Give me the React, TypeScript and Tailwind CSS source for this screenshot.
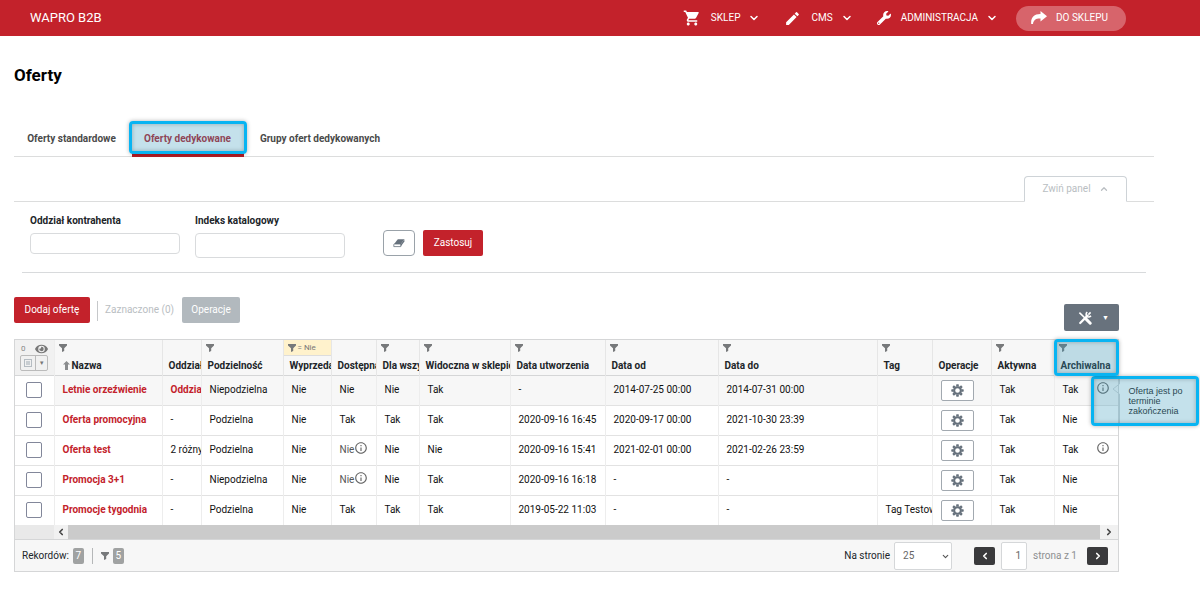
import React from 'react';
import { MdShoppingCart, MdEdit, MdInfoOutline } from 'react-icons/md';
import { FaWrench, FaEye } from 'react-icons/fa';
import { ChevronDown, ChevronUp, ChevronLeft, ChevronRight } from 'lucide-react';

interface Offer {
  name: string;
  branch: string;
  divisible: string;
  sale: string;
  available: string;
  availableInfo?: boolean;
  forAll: string;
  visible: string;
  created: string;
  from: string;
  to: string;
  tag: string;
  archived: string;
  archivedInfo?: boolean;
}

const offers: Offer[] = [
  { name: 'Letnie orzeźwienie', branch: 'Oddział', divisible: 'Niepodzielna', sale: 'Nie', available: 'Nie', forAll: 'Nie', visible: 'Tak', created: '-', from: '2014-07-25 00:00', to: '2014-07-31 00:00', tag: '', archived: 'Tak', archivedInfo: true },
  { name: 'Oferta promocyjna', branch: '-', divisible: 'Podzielna', sale: 'Nie', available: 'Tak', forAll: 'Tak', visible: 'Tak', created: '2020-09-16 16:45', from: '2020-09-17 00:00', to: '2021-10-30 23:39', tag: '', archived: 'Nie' },
  { name: 'Oferta test', branch: '2 różnych', divisible: 'Podzielna', sale: 'Nie', available: 'Nie', availableInfo: true, forAll: 'Nie', visible: 'Nie', created: '2020-09-16 15:41', from: '2021-02-01 00:00', to: '2021-02-26 23:59', tag: '', archived: 'Tak', archivedInfo: true },
  { name: 'Promocja 3+1', branch: '-', divisible: 'Niepodzielna', sale: 'Nie', available: 'Nie', availableInfo: true, forAll: 'Nie', visible: 'Tak', created: '2020-09-16 16:18', from: '-', to: '-', tag: '', archived: 'Nie' },
  { name: 'Promocje tygodnia', branch: '-', divisible: 'Podzielna', sale: 'Nie', available: 'Tak', forAll: 'Tak', visible: 'Tak', created: '2019-05-22 11:03', from: '-', to: '-', tag: 'Tag Testowy', archived: 'Nie' },
];

const columns = [
  { label: 'Nazwa', width: 'w-[108px]', filter: true },
  { label: 'Oddział', width: 'w-[39px]', filter: false },
  { label: 'Podzielność', width: 'w-[82px]', filter: true },
  { label: 'Wyprzedaż', width: 'w-[48px]', filter: true },
  { label: 'Dostępna', width: 'w-[45px]', filter: false },
  { label: 'Dla wszystkich', width: 'w-[43px]', filter: true },
  { label: 'Widoczna w sklepie', width: 'w-[91px]', filter: true },
  { label: 'Data utworzenia', width: 'w-[95px]', filter: true },
  { label: 'Data od', width: 'w-[113px]', filter: true },
  { label: 'Data do', width: '', filter: true },
  { label: 'Tag', width: 'w-[55px]', filter: true },
  { label: 'Operacje', width: 'w-[59px]', filter: false },
  { label: 'Aktywna', width: 'w-[63px]', filter: true },
  { label: 'Archiwalna', width: 'w-[64px]', filter: true },
];

const teeth = [0, 45, 90, 135, 180, 225, 270, 315];

const FilterIcon = () => (
  <svg viewBox="0 0 8 8" className="block w-2 h-2 shrink-0 fill-[#77797b]">
    <path d="M0 0h8v1.6L5.2 4.2V7L3 8V4.2L0 1.6z" />
  </svg>
);

const ShareIcon = () => (
  <svg viewBox="0 0 16 14" className="w-4 h-[14px] fill-current">
    <path d="M9.5 0L16 5.2L9.5 10.4V7.4C5.5 7.2 2.6 8.2 2 13H.2C-.4 6.5 3 2.9 9.5 3z" />
  </svg>
);

const GearIcon = () => (
  <svg viewBox="0 0 14 14" className="w-[13px] h-[13px] text-[#66717c]">
    <circle cx="7" cy="7" r="3.6" fill="none" stroke="currentColor" strokeWidth="2.2" />
    {teeth.map((angle) => (
      <path key={angle} d="M5.8 .3h2.4l.4 2.5H5.4z" fill="currentColor" transform={`rotate(${angle} 7 7)`} />
    ))}
  </svg>
);

const EraserIcon = () => (
  <svg viewBox="0 0 12 10" className="w-3 h-[10px]">
    <path d="M4.8 1.2h6.6L7.8 6H1.2z" fill="#66717c" />
    <path d="M1.2 6h6.6v2.6H.8V6.6z" fill="#fff" stroke="#66717c" strokeWidth=".8" />
    <path d="M7.8 6l3.6-4.8v2.4L7.8 8.6z" fill="#66717c" />
  </svg>
);

const ToolsIcon = () => (
  <svg viewBox="0 0 14 14" className="w-[14px] h-[14px]" fill="none" stroke="currentColor">
    <path d="M2.2 12L9.6 4.6" strokeWidth="2.2" strokeLinecap="round" />
    <path d="M12.6 1.4L10.4 3.6M9.3 1.2a2.6 2.6 0 1 0 3.6 3.6" strokeWidth="1.6" />
    <path d="M1.4 1.6L8 8" strokeWidth="1.6" />
    <path d="M8.4 8.4l3.8 3.8" strokeWidth="3" strokeLinecap="round" />
  </svg>
);

const Highlight = ({ className }: { className: string }) => (
  <span className={`absolute z-20 pointer-events-none rounded border-3 border-[#08b4f2] bg-[#3a9dbd]/30 shadow-[0_0_4px_rgba(0,0,0,0.3),inset_0_0_4px_rgba(0,0,0,0.25)] ${className}`} />
);

const NavItem = ({ icon, label }: { icon: React.ReactNode; label: string }) => (
  <button className="flex items-center uppercase">
    {icon}
    <span className="ml-[10px] mr-2">{label}</span>
    <ChevronDown className="w-3 h-3" strokeWidth={3} />
  </button>
);

const cell = 'border-r border-[#ededed] pl-2 whitespace-nowrap overflow-hidden';

export default function App() {
  return (
    <div className="font-['Roboto',sans-serif] text-[10px] leading-4 text-[#212529] bg-white">
      <header className="h-9 bg-[#c3222b] text-white flex items-center pl-[30px] pr-[74px]">
        <span className="text-[13px]">WAPRO B2B</span>
        <nav className="ml-auto flex items-center">
          <div className="flex items-center gap-6 mr-[18px]">
            <NavItem icon={<MdShoppingCart className="w-[18px] h-[18px]" />} label="Sklep" />
            <NavItem icon={<MdEdit className="w-[17px] h-[17px]" />} label="CMS" />
            <NavItem icon={<FaWrench className="w-[14px] h-[14px]" />} label="Administracja" />
          </div>
          <a href="#" className="h-[25px] w-[110px] rounded-full bg-[#d7646b] flex items-center pl-[15px] gap-[9px]">
            <ShareIcon />
            DO SKLEPU
          </a>
        </nav>
      </header>

      <main className="pl-[14px] pr-[46px] pt-[27px]">
        <h1 className="text-[17px] leading-6 font-bold text-black">Oferty</h1>

        <div className="mt-[34px] h-9 flex items-stretch border-b border-[#dcdddd] font-bold text-[#4a4a4a]">
          <button className="w-[115px]">Oferty standardowe</button>
          <button className="relative w-[117px] text-[#b3202a]">
            Oferty dedykowane
            <span className="absolute left-[3px] right-[2px] -bottom-px h-1 bg-[#b41c25]" />
            <Highlight className="left-0 -right-px top-0 bottom-[2px]" />
          </button>
          <button className="w-[148px]">Grupy ofert dedykowanych</button>
        </div>

        {/* Filters panel */}
        <div className="mt-[19px] flex justify-end border-b border-[#dcdddd] pr-[27px]">
          <button className="-mb-px h-[26px] w-[103px] border border-[#ced3d7] border-b-white bg-white rounded-t-sm text-[#b9bec2] flex items-center justify-center gap-2">
            Zwiń panel
            <ChevronUp className="w-[10px] h-[10px]" strokeWidth={3} />
          </button>
        </div>
        <form className="mx-2 pl-2 pt-[11px] h-[71px] flex items-start border-b border-[#d8dadc]">
          <div className="w-[165px]">
            <label htmlFor="branch" className="block font-bold">Oddział kontrahenta</label>
            <input id="branch" className="mt-1 block h-[21px] w-[150px] border border-[#d9dbdd] rounded-sm px-1" />
          </div>
          <div className="w-[188px]">
            <label htmlFor="index" className="block font-bold">Indeks katalogowy</label>
            <input id="index" className="mt-1 block h-[25px] w-[150px] border border-[#d9dbdd] rounded-sm px-1" />
          </div>
          <button type="button" aria-label="Wyczyść" className="mt-[17px] w-8 h-[26px] border border-[#9aa2a9] rounded-sm flex items-center justify-center">
            <EraserIcon />
          </button>
          <button type="button" className="mt-[17px] ml-2 w-[60px] h-[26px] bg-[#c3222b] text-white rounded-xs">Zastosuj</button>
        </form>

        <div className="mr-[35px]">
          {/* Toolbar */}
          <div className="mt-6 h-[42px] flex items-start">
            <button className="w-[76px] h-[26px] bg-[#c3222b] text-white rounded-xs">Dodaj ofertę</button>
            <span className="mt-1 ml-[7px] w-px h-5 bg-[#c6c8ca]" />
            <span className="ml-[7px] leading-[26px] text-[#b9bec2]">Zaznaczone (0)</span>
            <button className="ml-2 w-[58px] h-[26px] bg-[#b2b9be] text-white rounded-xs">Operacje</button>
            <button aria-label="Narzędzia" className="ml-auto mt-[7px] w-[55px] h-[27px] bg-[#68727d] text-white rounded-xs flex items-center justify-center gap-[10px] pl-1">
              <ToolsIcon />
              <span className="text-[7px]">▼</span>
            </button>
          </div>

          {/* Grid */}
          <div className="border border-[#d5d6d7]">
            <table className="w-full table-fixed border-collapse">
              <thead className="bg-[#f7f7f7]">
                <tr className="h-[35px] border-b border-[#d5d6d7]">
                  <th className="w-[39px] border-r border-[#ededed] p-0 bg-[#f1f1f1]">
                    <div className="flex items-center justify-between px-[6px] text-[8px] leading-3 font-normal text-[#888]">
                      0 <FaEye className="w-[13px] h-3 text-[#777]" />
                    </div>
                    <div className="mx-auto flex w-7 h-4 border border-[#bbb] rounded-xs">
                      <button aria-label="Zaznacz" className="flex-1 border-r border-[#bbb] flex items-center justify-center">
                        <span className="w-2 h-2 border border-[#b5bcc2] flex items-center justify-center">
                          <span className="w-1 h-1 bg-[#c9ced2]" />
                        </span>
                      </button>
                      <button aria-label="Menu" className="w-[11px] text-[6px] leading-3 text-[#777]">▼</button>
                    </div>
                  </th>
                  {columns.map((col, i) => (
                    <th key={col.label} className={`relative p-0 align-top text-left whitespace-nowrap border-[#e6e6e6] ${i < 13 ? 'border-r' : ''} ${col.width}`}>
                      {col.label === 'Wyprzedaż' ? (
                        <div className="h-4 pl-1 flex items-center gap-[2px] bg-[#fff2cc] border-b border-[#ddd] text-[8px] font-normal text-[#777]">
                          <FilterIcon /> = Nie
                        </div>
                      ) : (
                        <div className="h-4 pl-1 flex items-center">{col.filter && <FilterIcon />}</div>
                      )}
                      <div className="pl-[6px] h-[18px] leading-[20px] overflow-hidden">
                        {i === 0 && (
                          <svg viewBox="0 0 7 9" className="inline-block w-[7px] h-[9px] ml-[2px] mr-[2px] mb-[2px] fill-[#8a8c8e]">
                            <path d="M3.5 0L7 3.5H5V9H2V3.5H0z" />
                          </svg>
                        )}
                        {col.label}
                      </div>
                      {i === 13 && <Highlight className="-inset-x-px -top-px -bottom-px" />}
                    </th>
                  ))}
                </tr>
              </thead>
              <tbody>
                {offers.map((offer, i) => (
                  <tr key={offer.name} className={`h-[30px] text-[#111] ${i < offers.length - 1 ? 'border-b border-[#e2e2e2]' : ''} ${i === 0 ? 'bg-[#f7f7f7]' : ''}`}>
                    <td className="border-r border-[#ededed] p-0 bg-white">
                      <input type="checkbox" aria-label={offer.name} className="block mx-auto appearance-none w-4 h-4 border border-[#82879a] rounded-xs bg-white" />
                    </td>
                    <td className={`${cell} font-bold`}><a href="#" className="text-[#c3222b]">{offer.name}</a></td>
                    <td className={`${cell} ${i === 0 ? 'font-bold text-[#c3222b]' : ''}`}>{offer.branch}</td>
                    <td className={cell}>{offer.divisible}</td>
                    <td className={cell}>{offer.sale}</td>
                    <td className={cell}>
                      <span className={`flex items-center ${offer.availableInfo ? 'text-[#555]' : ''}`}>
                        {offer.available}
                        {offer.availableInfo && <MdInfoOutline className="w-[14px] h-[14px] mb-1 text-[#666]" />}
                      </span>
                    </td>
                    <td className={cell}>{offer.forAll}</td>
                    <td className={cell}>{offer.visible}</td>
                    <td className={cell}>{offer.created}</td>
                    <td className={cell}>{offer.from}</td>
                    <td className={cell}>{offer.to}</td>
                    <td className={cell}>{offer.tag}</td>
                    <td className={cell}>
                      <button aria-label="Operacje" className="w-[33px] h-[21px] bg-white border border-[#a2a9b0] rounded-xs flex items-center justify-center">
                        <GearIcon />
                      </button>
                    </td>
                    <td className={cell}>Tak</td>
                    <td className="relative p-0 pl-2">
                      <div className="flex items-center justify-between pr-2">
                        {offer.archived}
                        {offer.archivedInfo && <MdInfoOutline className="w-[14px] h-[14px] mb-1 text-[#666]" />}
                      </div>
                      {i === 0 && (
                        <div role="tooltip" className="absolute z-10 left-9 top-0 w-[108px] h-[50px] pl-[38px] pt-[10px] font-['Liberation_Sans',sans-serif] text-[9px] leading-[10px] text-[#222]">
                          Oferta jest po terminie zakończenia
                          <svg viewBox="0 0 8 50" className="absolute left-[21px] top-0 w-2 h-[50px]" fill="none" stroke="#d0d4d6">
                            <path d="M7.5 0V8L1 13L7.5 18V50" />
                          </svg>
                          <Highlight className="inset-0" />
                        </div>
                      )}
                    </td>
                  </tr>
                ))}
              </tbody>
            </table>

            {/* Horizontal scrollbar */}
            <div className="h-[14px] flex bg-[#e9e9e9] pl-[39px]">
              <button aria-label="Przewiń w lewo" className="w-[14px] bg-[#f1f1f1] flex items-center justify-center text-[#444]">
                <ChevronLeft className="w-[10px] h-[10px]" strokeWidth={4} />
              </button>
              <div className="flex-1 bg-[#cbcbcb]" />
              <button aria-label="Przewiń w prawo" className="w-[18px] bg-[#f1f1f1] flex items-center justify-center text-[#444]">
                <ChevronRight className="w-[10px] h-[10px]" strokeWidth={4} />
              </button>
            </div>

            <footer className="h-8 flex items-center border-t border-[#d5d6d7] bg-[#f7f7f7] pl-[7px] pr-[10px]">
              <span>Rekordów:</span>
              <span className="ml-1 w-[11px] rounded-xs bg-[#a0a2a2] text-white text-center">7</span>
              <span className="mx-2 w-px h-4 bg-[#b5b7b8]" />
              <FilterIcon />
              <span className="ml-1 w-[11px] rounded-xs bg-[#a0a2a2] text-white text-center">5</span>

              <label htmlFor="perPage" className="ml-auto">Na stronie</label>
              <div className="relative ml-1">
                <select id="perPage" className="block appearance-none w-[58px] h-7 pl-2 border border-[#d5d7d9] rounded-xs bg-white text-[#666]">
                  <option>25</option>
                </select>
                <ChevronDown className="absolute right-[2px] top-[10px] w-[9px] h-[9px] text-[#555] pointer-events-none" strokeWidth={3} />
              </div>
              <button aria-label="Poprzednia strona" className="ml-[22px] w-[21px] h-[18px] rounded-xs bg-[#3a3a3c] text-white flex items-center justify-center">
                <ChevronLeft className="w-[10px] h-[10px]" strokeWidth={4} />
              </button>
              <input aria-label="Strona" defaultValue="1" className="ml-[6px] w-[26px] h-7 pr-[5px] border border-[#d5d7d9] rounded-xs bg-white text-right text-[#666]" />
              <span className="ml-[6px] text-[#8d8f91]">strona z 1</span>
              <button aria-label="Następna strona" className="ml-[10px] w-[21px] h-[18px] rounded-xs bg-[#3a3a3c] text-white flex items-center justify-center">
                <ChevronRight className="w-[10px] h-[10px]" strokeWidth={4} />
              </button>
            </footer>
          </div>
        </div>
      </main>
    </div>
  );
}
